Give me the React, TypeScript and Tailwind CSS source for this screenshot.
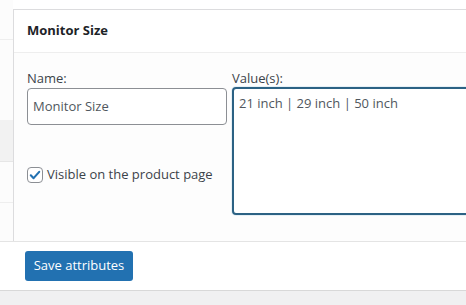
import React from "react";

const App: React.FC = () => {
  return (
    <div
      className="w-[466px] h-[305px] overflow-hidden bg-white flex flex-col text-[13px] text-[#3c434a]"
      style={{ fontFamily: '"Open Sans", "Noto Sans", sans-serif' }}
    >
      <div className="flex h-[241px]">
        {/* left tabs strip */}
        <div className="w-[13px] shrink-0 flex flex-col">
          <div className="h-[40px] border-b border-[#eeeeee] bg-[#fcfcfc]" />
          <div className="h-[80px] bg-[#fcfcfc]" />
          <div className="h-[42px] bg-[#f2f2f2] border-b border-[#e6e6e6]" />
          <div className="h-[41px] bg-[#fcfcfc] border-b border-[#eeeeee]" />
          <div className="flex-1 bg-[#fcfcfc]" />
        </div>

        {/* attribute panel */}
        <div className="flex-1 mt-[9px] border-t border-l border-[#dcdcde] flex flex-col min-w-0 overflow-hidden">
          <div className="h-[43px] flex items-center pl-[13px] border-b border-[#eeeeee] bg-white">
            <span className="font-bold text-[13px] text-[#1d2327]">Monitor Size</span>
          </div>
          <div className="flex-1 bg-[#fdfdfd] flex gap-[5px] pl-[13px] pt-[16px]">
            <div className="w-[200px] shrink-0 flex flex-col">
              <label className="leading-[18px] mb-[1px]">Name:</label>
              <div className="h-[37px] border border-[#8c8f94] rounded-[4px] bg-white flex items-center px-[5px] text-[13px] text-[#50575e]">
                Monitor Size
              </div>
              <div className="flex items-center gap-[4px] mt-[40px]">
                <span className="w-[16px] h-[16px] border border-[#8c8f94] rounded-[4px] bg-white flex items-center justify-center">
                  <svg width="14" height="14" viewBox="0 0 20 20">
                    <path
                      d="M4 10.5l4 4 8-9"
                      fill="none"
                      stroke="#2271b1"
                      strokeWidth="3"
                      strokeLinecap="round"
                      strokeLinejoin="round"
                    />
                  </svg>
                </span>
                <span className="text-[13px] text-[#3c434a]">Visible on the product page</span>
              </div>
            </div>
            <div className="w-[320px] shrink-0 flex flex-col">
              <label className="leading-[18px]">Value(s):</label>
              <div className="h-[128px] border-2 border-[#2c6284] rounded-[4px] bg-white px-[5px] pt-[5px] text-[13px] text-[#50575e] shadow-[0_0_0_1px_#e6f0f6]">
                21 inch | 29 inch | 50 inch
              </div>
            </div>
          </div>
        </div>
      </div>

      {/* toolbar */}
      <div className="h-[49px] border-t border-[#e4e4e4] bg-white flex items-center pl-[25px]">
        <button className="h-[30px] w-[108px] rounded-[3px] bg-[#2271b1] text-white text-[13px]">
          Save attributes
        </button>
      </div>

      <div className="flex-1 bg-[#f0f0f1] border-t border-[#d8d8d8]" />
    </div>
  );
};

export default App;
